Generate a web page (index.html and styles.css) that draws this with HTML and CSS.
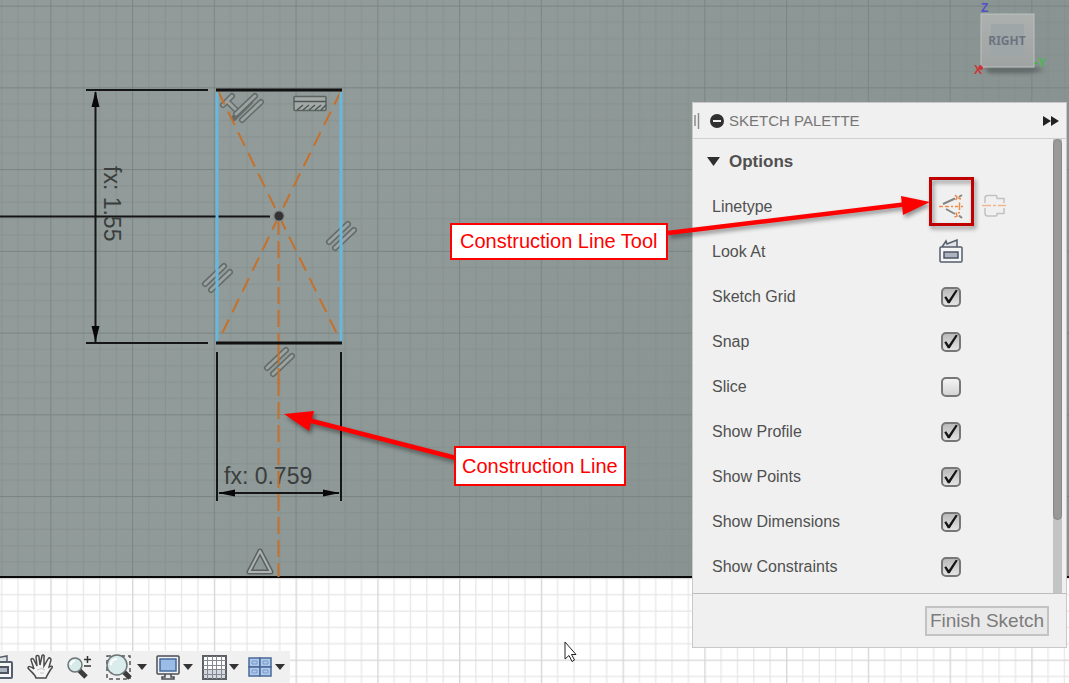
FILE: index.html
```
<!DOCTYPE html>
<html lang="en">
<head>
<meta charset="utf-8">
<title>Sketch</title>
<link rel="stylesheet" href="styles.css">
</head>
<body>
<main class="workspace">
  <svg class="layer" aria-label="Sketch canvas">
    <defs>
      <linearGradient id="plane" x1="0" y1="0" x2="1" y2="0.4">
        <stop offset="0" stop-color="#929b99"/>
        <stop offset="0.4" stop-color="#919b99"/>
        <stop offset="1" stop-color="#87918f"/>
      </linearGradient>
      <pattern id="darkGrid" x="50.3" y="5.6" width="81.75" height="81.75" patternUnits="userSpaceOnUse">
        <path class="grid-minor" d="M16.8 0V82M33.2 0V82M49.5 0V82M65.9 0V82M0 16.8H82M0 33.2H82M0 49.5H82M0 65.9H82"/>
        <path class="grid-major" d="M.6 0V82M0 .6H82"/>
      </pattern>
      <pattern id="lightGrid" x="50.3" y="5.6" width="81.75" height="81.75" patternUnits="userSpaceOnUse">
        <path class="light-minor" d="M16.8 0V82M33.2 0V82M49.5 0V82M65.9 0V82M0 16.8H82M0 33.2H82M0 49.5H82M0 65.9H82"/>
        <path class="light-major" d="M.6 0V82M0 .6H82"/>
      </pattern>
      <g id="parallel">
        <path class="glyph-edge" d="M-12 6L7 -12M-6 12L13 -6"/>
        <path class="glyph-core" d="M-12 6L7 -12M-6 12L13 -6"/>
      </g>
    </defs>
    <rect width="100%" height="100%" fill="#fff"/>
    <rect width="100%" height="100%" fill="url(#lightGrid)"/>
    <rect width="100%" height="577" fill="url(#plane)"/>
    <rect width="100%" height="577" fill="url(#darkGrid)"/>
    <rect y="576" width="100%" height="2" fill="#080808"/>

    <path class="ink" d="M0 216.500H270M86 90H208M86 343H208M95.500 92V342M217 352V501M341 352V501M219 493H339"/>
    <path class="arrowhead" d="M95.500 91L91.500 107H99.500ZM95.500 342L91.500 326H99.500ZM218 493L235 489.500V496.500ZM340 493L323 489.500V496.500Z"/>
    <text class="dimension" x="224" y="484">fx: 0.759</text>
    <text class="dimension" transform="translate(104 166) rotate(90)">fx: 1.55</text>

    <g transform="translate(236 106)">
      <path class="glyph-edge" d="M-13 -1L-4 -10M-9 -5L3 7M-2 12L14 -4"/>
      <path class="glyph-core" d="M-13 -1L-4 -10M-9 -5L3 7"/>
    </g>
    <use href="#parallel" x="248" y="108"/>
    <rect x="294" y="96.500" width="32" height="14" rx="1" fill="#a3a9a7" stroke="#5c6462" stroke-width="1.500"/>
    <path d="M294 101.500H326M297 110l6-5M303 110l6-5M309 110l6-5M315 110l6-5M321 110l5-5" fill="none" stroke="#4e5553" stroke-width="1.500"/>

    <path class="construction" stroke-dasharray="15 8" d="M218 91L279 216M341 91L279 216M279 216L218 342M279 216L341 342"/>
    <path class="construction" stroke-dasharray="17 6" d="M278.500 218V577"/>
    <path d="M217 92V342M341 92V342" stroke="#68b8dc" stroke-width="3"/>
    <path d="M216 90H342M216 343H342" stroke="#111" stroke-width="3"/>
    <circle cx="279" cy="216" r="6" fill="#858c89"/>
    <circle cx="279" cy="216" r="4.500" fill="#333"/>
    <use href="#parallel" x="341" y="236"/>
    <use href="#parallel" x="217" y="278"/>
    <use href="#parallel" x="279" y="362"/>
    <path d="M217 262V294M341 220V252" stroke="#68b8dc" stroke-width="3"/>
    <path d="M278.500 350V361M278.500 368V384" stroke="#c5712b" stroke-width="2"/>
    <path d="M260 551L249 572H271Z" fill="none" stroke="#5b6260" stroke-width="5" stroke-linejoin="round"/>
    <path d="M260 551L249 572H271Z" fill="none" stroke="#aeb3b1" stroke-width="2" stroke-linejoin="round"/>
  </svg>

  <svg class="view-cube" viewBox="0 0 80 80" role="img" aria-label="View cube">
    <defs>
      <linearGradient id="face" x1="0" y1="0" x2="0" y2="1">
        <stop offset="0" stop-color="#acb1b0"/><stop offset="1" stop-color="#9fa4a3"/>
      </linearGradient>
    </defs>
    <path class="cube-shadow" d="M15 67H66L76 70L60 73H20Z"/>
    <rect x="12" y="14" width="53" height="53" fill="url(#face)" stroke="#bcc1c0"/>
    <rect x="22" y="24" width="33" height="32" fill="#9fa6a8"/>
    <text class="cube-face" x="38" y="45">RIGHT</text>
    <text class="axis axis-z" x="12" y="12">Z</text>
    <text class="axis axis-x" x="5" y="74">X</text>
    <text class="axis axis-y" x="69" y="67">Y</text>
    <circle cx="12" cy="68" r="2" fill="#d22f2f"/>
    <circle cx="67" cy="63" r="1.500" fill="#3fb54a"/>
  </svg>

  <section class="palette" aria-label="Sketch palette">
    <header class="palette-head">
      <svg class="grip" width="6" height="18"><path d="M1 3V14M4.500 1V17" stroke="#8b8b8b" stroke-width="1.500"/></svg>
      <button class="plain" aria-label="Collapse"><svg width="14" height="14"><circle cx="7" cy="7" r="7" fill="#303030"/><path d="M3 7H11" stroke="#eee" stroke-width="2"/></svg></button>
      <h1 class="palette-title">SKETCH PALETTE</h1>
      <button class="plain dock" aria-label="Dock"><svg width="16" height="12"><path d="M0 1L8 6L0 11ZM8 1L16 6L8 11Z" fill="#222"/></svg></button>
    </header>
    <div class="palette-body">
      <div class="options">
        <button class="plain group-title"><svg width="14" height="10"><path d="M0 0H13L6.500 9Z" fill="#2f2f2f"/></svg>Options</button>
        <div class="row">
          <span>Linetype</span>
          <button class="plain" aria-label="Construction">
            <svg width="26" height="26" viewBox="0 0 26 26" fill="none">
              <path d="M5 10L17 4.500M8 15L17 20M21 3L24 1M21 21.500L24 24" stroke="#858585" stroke-width="2"/>
              <path d="M1 12.500H5M7 12.500H11M13 12.500H15M17 12.500H20M23 12.500H25M21.500 8.500V16M17 1L19 3L18 6M20 4L23 5M16.500 23L19 22L18 18.500M20 19L22 18.500" stroke="#ee8a48" stroke-width="1.500"/>
            </svg>
          </button>
          <button class="plain" aria-label="Centerline">
            <svg width="26" height="26" viewBox="0 0 26 26" fill="none">
              <path d="M3 9V4Q3 1.500 5.500 1.500H14Q15 1.500 15 4.500H22V9M3 14V19Q3 22 5.500 22H14Q15 22 15 19.500H22V14" stroke="#c1c1c1" stroke-width="1.500"/>
              <path d="M0 11.500H9M11 11.500H14M16 11.500H24" stroke="#f0b78e" stroke-width="1.500"/>
            </svg>
          </button>
        </div>
        <div class="row">
          <span>Look At</span>
          <button class="plain" aria-label="Look At">
            <svg width="26" height="26" viewBox="0 0 26 26">
              <path d="M4 8L8 2L9 5L19 1V8" fill="#dfe3e8" stroke="#555e6b" stroke-width="1.500"/>
              <rect x="2" y="8" width="22" height="15" rx="1" fill="#f6f7f8" stroke="#555e6b" stroke-width="1.500"/>
              <rect x="6" y="13" width="14" height="6" fill="#abb4c0" stroke="#4d5561" stroke-width="1.500"/>
            </svg>
          </button>
        </div>
        <label class="row"><span>Sketch Grid</span><input class="tick" type="checkbox" checked></label>
        <label class="row"><span>Snap</span><input class="tick" type="checkbox" checked></label>
        <label class="row"><span>Slice</span><input class="tick" type="checkbox"></label>
        <label class="row"><span>Show Profile</span><input class="tick" type="checkbox" checked></label>
        <label class="row"><span>Show Points</span><input class="tick" type="checkbox" checked></label>
        <label class="row"><span>Show Dimensions</span><input class="tick" type="checkbox" checked></label>
        <label class="row"><span>Show Constraints</span><input class="tick" type="checkbox" checked></label>
      </div>
      <div class="scroll-track"><div class="scroll-thumb"></div></div>
    </div>
    <footer class="palette-foot"><button class="finish">Finish Sketch</button></footer>
  </section>

  <nav class="toolbar" aria-label="Navigation">
    <div class="tools">
      <button class="plain" aria-label="Look at"><svg width="14" height="26" viewBox="12 0 14 26">
        <path d="M3 8L8 4L19 2V8" fill="#dfe3e8" stroke="#555e6b" stroke-width="1.500"/>
        <rect x="2" y="8" width="22" height="16" rx="1" fill="#f6f7f8" stroke="#555e6b" stroke-width="2"/>
        <rect x="7" y="13" width="13" height="6" fill="#abb4c0" stroke="#4d5561" stroke-width="2"/></svg></button>
      <button class="plain" aria-label="Pan"><svg width="26" height="26" viewBox="0 0 26 26">
        <path d="M9 24C8 20 4 18 1 14C1 12 4 12 7 15L4 6C4 4 6 4 7 6L10 12L9 3C9 1 12 1 12 3L13 11L15 2C15 0 18 1 17 3L17 12L21 5C22 3 24 4 24 6L22 13C26 11 26 13 24 15C21 20 20 21 19 24Z" fill="#f5f5f5" stroke="#4b4b4b" stroke-width="1.500"/><path d="M10 16Q14 13 18 16M13 19H17" fill="none" stroke="#c8c8c8"/></svg></button>
      <button class="plain" aria-label="Zoom"><svg width="26" height="26" viewBox="0 0 26 26">
        <path d="M13 16L20 23" stroke="#3c3c3c" stroke-width="5"/><circle cx="9" cy="11" r="7" fill="#d5eae9" stroke="#6c7476" stroke-width="1.500"/><path d="M5 11Q5 7 9 7" stroke="#fff" stroke-width="2" fill="none"/>
        <path d="M18 5.500H25M21.500 2V9M18 12H25" stroke="#333" stroke-width="1.500"/></svg></button>
      <button class="plain" aria-label="Zoom window"><svg width="30" height="26" viewBox="0 0 30 26">
        <rect x="2" y="2" width="23" height="23" fill="none" stroke="#555" stroke-width="1.500" stroke-dasharray="4 3"/>
        <path d="M18 17L25 24" stroke="#3c3c3c" stroke-width="5"/><circle cx="12" cy="11" r="10" fill="#daeceb" stroke="#6c7476" stroke-width="1.500"/><path d="M6 11Q6 5 12 5" stroke="#fff" stroke-width="2" fill="none"/></svg><i class="caret"></i></button>
    </div>
    <div class="menus">
      <button class="plain" aria-label="Display"><svg width="26" height="26" viewBox="0 0 26 26">
        <path d="M10 20V23H7V25H19V23H16V20" fill="#eee" stroke="#484c52" stroke-width="1.500"/><rect x="2" y="2" width="22" height="18" rx="1" fill="#f1f1f1" stroke="#4a4f57" stroke-width="1.500"/><rect x="5" y="5" width="16" height="12" fill="#9bbce4" stroke="#456a9d" stroke-width="1.500"/></svg><i class="caret"></i></button>
      <button class="plain" aria-label="Grid"><svg width="26" height="26" viewBox="0 0 26 26">
        <rect x="2" y="2" width="23" height="23" fill="#fff" stroke="#5c5f64" stroke-width="2"/><rect x="3" y="15" width="21" height="9" fill="#d3d8e1"/><path d="M6.500 2V25M11.500 2V25M15.500 2V25M20.500 2V25M2 6.500H25M2 11.500H25M2 15.500H25M2 20.500H25" stroke="#85898f"/></svg><i class="caret"></i></button>
      <button class="plain" aria-label="Viewports"><svg width="26" height="26" viewBox="0 0 26 26">
        <g fill="#b0caec" stroke="#4a6796" stroke-width="1.500"><rect x="2" y="4" width="11" height="9"/><rect x="13" y="4" width="11" height="9"/><rect x="2" y="13" width="11" height="9"/><rect x="13" y="13" width="11" height="9"/></g><path d="M5 7H10V10H5ZM16 7H21V10H16ZM5 16H10V19H5ZM16 16H21V19H16Z" fill="none" stroke="#7899c7"/></svg><i class="caret"></i></button>
    </div>
  </nav>

  <svg class="layer annotations" aria-hidden="true">
    <g class="shadowed">
      <path d="M668 233L908 204M456 458L308 420" stroke="#f00" stroke-width="4.500"/>
      <path d="M930 202L901 196L903 215ZM284 414L314 411L309 431Z" fill="#f00"/>
    </g>
    <rect class="shadowed" x="930.500" y="178.500" width="42" height="46" fill="none" stroke="#c00000" stroke-width="3"/>
    <path d="M565 642V659L569 655.500L572 661.500L574.500 660L571.500 654.500H576Z" fill="#fff" stroke="#222"/>
  </svg>
  <p class="callout callout-tool">Construction Line Tool</p>
  <p class="callout callout-line">Construction Line</p>
</main>
</body>
</html>
```
FILE: styles.css
```
* { box-sizing: border-box; }
body { margin: 0; font-family: "Liberation Sans", Arial, sans-serif; font-size: 16px; color: #505050; }
svg { display: block; }
.workspace { position: relative; min-height: 100vh; overflow: hidden; }
.layer { position: absolute; inset: 0; width: 100%; height: 100%; }
.annotations { pointer-events: none; }
.plain { display: flex; align-items: center; padding: 0; border: 0; background: none; color: inherit; font: inherit; }

.grid-minor { stroke: #808b89; stroke-width: 1; opacity: 0.6; }
.grid-major { stroke: #798482; stroke-width: 1; }
.light-minor { stroke: #e6e6e6; stroke-width: 1.2; }
.light-major { stroke: #d6d6d6; stroke-width: 1.5; }
.ink { stroke: #151515; stroke-width: 2; fill: none; }
.arrowhead { fill: #080808; }
.dimension { font-size: 23px; fill: #3a3e3d; }
.construction { stroke: #c5712b; stroke-width: 2; fill: none; }
.glyph-edge { stroke: #646c6a; stroke-width: 6; stroke-linecap: round; fill: none; }
.glyph-core { stroke: #9ca3a1; stroke-width: 3; stroke-linecap: round; fill: none; }

.view-cube { position: absolute; top: 0; right: 20px; width: 80px; height: 80px; }
.cube-shadow { fill: #5c6563; filter: blur(2px); }
.cube-face { font: bold 12px "Liberation Sans Narrow", "Noto Sans", sans-serif; fill: #6d7480; text-anchor: middle; }
.axis { font-size: 12px; font-weight: bold; }
.axis-z { fill: #5050c8; }
.axis-x { fill: #c83a3a; }
.axis-y { fill: #4ab653; }

.palette { position: absolute; top: 102px; right: 2px; width: 375px; border: 1px solid #c8c8c8; background: #f0f0f0; }
.palette-head { display: flex; align-items: center; height: 36px; padding: 0 7px 0 1px; border-bottom: 1px solid #cfcfcf; }
.grip { margin-right: 10px; }
.palette-title { margin: 0 0 0 5px; font-size: 15px; font-weight: normal; color: #767676; }
.dock { margin-left: auto; }
.palette-body { display: flex; border-bottom: 1px solid #bdbdbd; padding-right: 4px; }
.options { flex: 1; padding: 0 0 4px 19px; }
.row { display: grid; grid-template-columns: 1fr 26px 26px; column-gap: 18px; align-items: center; height: 45px; padding-right: 45px; }
.row > span { margin-right: -18px; }
.group-title { gap: 8px; height: 45px; margin-left: -5px; font-size: 17px; font-weight: bold; }
.tick { appearance: none; justify-self: center; width: 20px; height: 20px; margin: 0; border: 2px solid #777; border-radius: 5px; background: linear-gradient(#f4f4f4, #d4d4d4); }
.tick:checked { background: linear-gradient(#b9b9b9, #e4e4e4); }
.tick:checked::before { content: ""; display: block; height: 16px; background: #151515; clip-path: polygon(8% 54%, 20% 48%, 36% 72%, 80% 8%, 92% 12%, 42% 92%, 30% 92%); }
.scroll-track { width: 9px; background: #c2c4c6; }
.scroll-thumb { height: 84%; border: 1px solid #888; border-radius: 5px; background: #999; }
.palette-foot { display: flex; justify-content: flex-end; padding: 12px 17px 11px; }
.finish { height: 30px; padding: 0 3px; border: 2px solid #c3c3c3; background: #e9e9e9; color: #7c7c7c; font: 19px "Liberation Sans", Arial, sans-serif; }

.toolbar { position: absolute; left: 0; bottom: 0; display: flex; gap: 8px; height: 32px; padding: 0 5px 0 0; align-items: center; background: #f0f0f0; }
.tools { display: flex; gap: 13px; }
.menus { display: flex; gap: 8px; }
.toolbar .plain { gap: 2px; }
.caret { border: 5px solid transparent; border-top: 6px solid #333; border-bottom: 0; }

.shadowed { filter: drop-shadow(2px 3px 2px rgba(0, 0, 0, 0.4)); }
.callout { position: absolute; margin: 0; padding: 0 8px; border: 2px solid #f00; background: #fff; color: #f00; font-size: 20px; white-space: nowrap; }
.callout-tool { left: 450px; top: 223px; line-height: 33px; }
.callout-line { left: 454px; top: 446px; padding: 0 6px; line-height: 36px; }
```
